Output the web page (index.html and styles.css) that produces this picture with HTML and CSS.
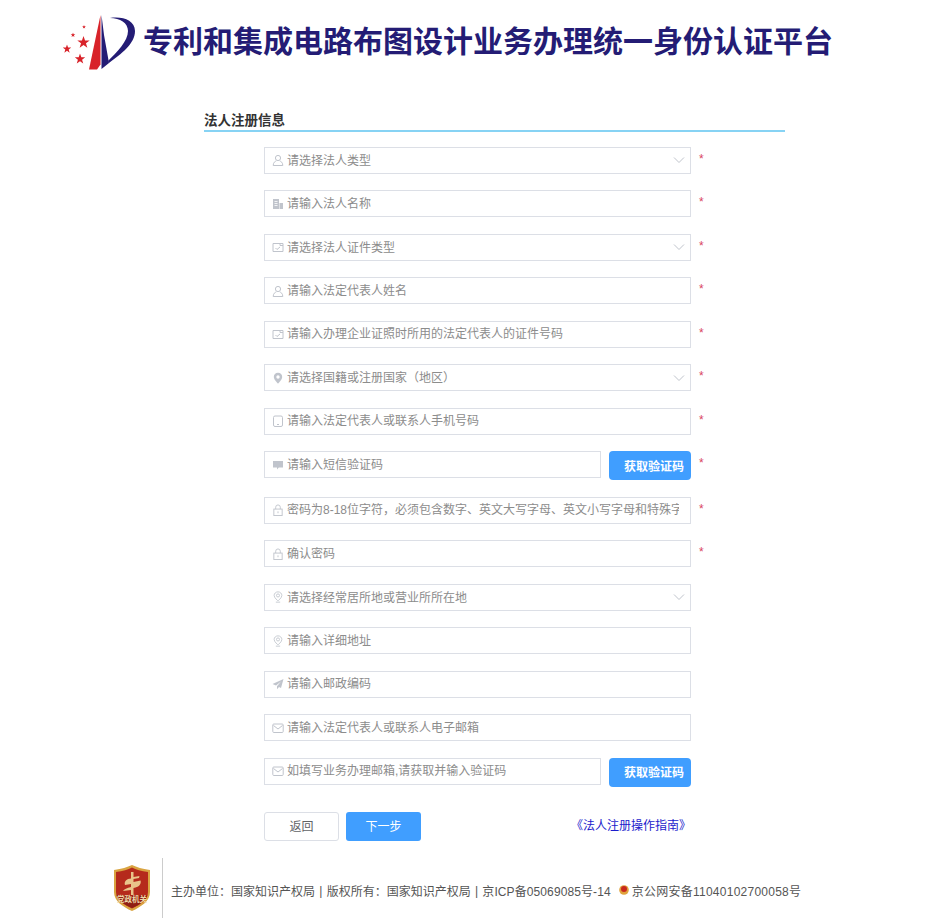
FILE: index.html

```html
<!doctype html>
<html lang="zh-CN">
<head>
  <title>专利和集成电路布图设计业务办理统一身份认证平台</title>
  <meta charset="utf-8">

  <link rel="stylesheet" href="styles.css">
</head>
<body>
  <svg class="defs" width="0" height="0">
    <symbol id="star" viewBox="-10 -10 20 20"><polygon points="0,-10 2.4,-3.2 9.5,-3.1 3.8,1.2 5.9,8.1 0,4 -5.9,8.1 -3.8,1.2 -9.5,-3.1 -2.4,-3.2"/></symbol>
    <symbol id="i-user" viewBox="0 0 12 12"><circle cx="6" cy="4" r="2.6" fill="none" stroke="currentColor"/><path d="M1.2 11.5c0-3 2-4.3 3-4.5M10.8 11.5c0-3-2-4.3-3-4.500M1.2 11.5h9.6" fill="none" stroke="currentColor"/></symbol>
    <symbol id="i-doc" viewBox="0 0 12 12"><path d="M1 1h6v10H1zM7.500 5H11v6H7.500z" fill="currentColor"/><path d="M2.500 3.500h3M2.500 5.500h3M2.500 7.500h3" stroke="#fff" stroke-width=".8"/></symbol>
    <symbol id="i-card" viewBox="0 0 12 12"><path d="M1 2.500h10v8H1z" fill="none" stroke="currentColor"/><path d="M3.500 7l1.500 1.500L8 6M8 2.500v2h3" fill="none" stroke="currentColor"/></symbol>
    <symbol id="i-pin" viewBox="0 0 12 12"><path d="M6 .8C3.400.8 1.800 2.700 1.800 4.900 1.800 7.600 6 11.500 6 11.500s4.200-3.900 4.200-6.600C10.200 2.700 8.600.8 6 .8z" fill="currentColor"/><circle cx="6" cy="5" r="1.700" fill="#fff"/></symbol>
    <symbol id="i-pin-line" viewBox="0 0 12 14"><path d="M6 1C3.300 1 1.500 3 1.500 5.300 1.500 8 6 11.500 6 11.500s4.500-3.500 4.500-6.200C10.500 3 8.700 1 6 1z" fill="none" stroke="currentColor"/><circle cx="6" cy="5.200" r="1.800" fill="none" stroke="currentColor"/><path d="M3.500 13h5" stroke="currentColor"/></symbol>
    <symbol id="i-phone" viewBox="0 0 12 12"><rect x="1.500" y="1" width="9" height="10.500" rx="1.500" fill="none" stroke="currentColor"/><path d="M5 9.500h2" stroke="currentColor"/></symbol>
    <symbol id="i-chat" viewBox="0 0 12 12"><path d="M1 2h10v6.500H6.800L5 10.500V8.500H1z" fill="currentColor"/></symbol>
    <symbol id="i-lock" viewBox="0 0 12 13"><rect x="1.500" y="5.500" width="9" height="7" fill="none" stroke="currentColor"/><path d="M3.500 5.500V3.500a2.500 2.500 0 0 1 5 0v2M6 8v2" fill="none" stroke="currentColor"/></symbol>
    <symbol id="i-send" viewBox="0 0 12 12"><path d="M11.500 1L.5 6l3.500 1.500L9 3.500 5 8.300v3l2-2.300 2 1z" fill="currentColor"/></symbol>
    <symbol id="i-mail" viewBox="0 0 12 12"><rect x=".8" y="2" width="10.400" height="8.500" rx="1" fill="none" stroke="currentColor"/><path d="M1.500 3.500L6 7l4.500-3.500" fill="none" stroke="currentColor"/></symbol>
    <symbol id="i-down" viewBox="0 0 12 12"><path d="M1 3.500l5 5 5-5" fill="none" stroke="currentColor"/></symbol>
  </svg>

  <div class="header">
    <svg class="logo" width="78" height="60" viewBox="60 12 78 60">
      <path d="M100.500 15L89 69.500h8l3.500-5z" fill="#d8232a"/>
      <path d="M101.500 15V69l7.500-6L104 35z" fill="#241c75"/>
      <path d="M110 18C120 18 128 23 128 31 128 41 117 52 108 61L109 63C121 54 135 44 135 31 135 20 122 16 110 18z" fill="#241c75"/>
      <use href="#star" x="77" y="36" width="13" height="13" fill="#d8232a"/>
      <use href="#star" x="62.500" y="44.500" width="9" height="9" fill="#d8232a"/>
      <use href="#star" x="74.500" y="53.500" width="11" height="11" fill="#d8232a"/>
      <use href="#star" x="70.500" y="32.500" width="5" height="5" fill="#d8232a"/>
      <use href="#star" x="82" y="25" width="4" height="4" fill="#d8232a"/>
    </svg>
    <div class="site-title">专利和集成电路布图设计业务办理统一身份认证平台</div>
  </div>

  <div class="register">
    <h2 class="section-title">法人注册信息</h2>
    <form class="form-list">
      <div class="row">
        <div class="field"><svg class="icon"><use href="#i-user"/></svg><span class="select-text">请选择法人类型</span><svg class="arrow"><use href="#i-down"/></svg></div>
        <span class="star">*</span>
      </div>
      <div class="row">
        <div class="field"><svg class="icon"><use href="#i-doc"/></svg><input type="text" placeholder="请输入法人名称"></div>
        <span class="star">*</span>
      </div>
      <div class="row">
        <div class="field"><svg class="icon"><use href="#i-card"/></svg><span class="select-text">请选择法人证件类型</span><svg class="arrow"><use href="#i-down"/></svg></div>
        <span class="star">*</span>
      </div>
      <div class="row">
        <div class="field"><svg class="icon"><use href="#i-user"/></svg><input type="text" placeholder="请输入法定代表人姓名"></div>
        <span class="star">*</span>
      </div>
      <div class="row">
        <div class="field"><svg class="icon"><use href="#i-card"/></svg><input type="text" placeholder="请输入办理企业证照时所用的法定代表人的证件号码"></div>
        <span class="star">*</span>
      </div>
      <div class="row">
        <div class="field"><svg class="icon"><use href="#i-pin"/></svg><span class="select-text">请选择国籍或注册国家（地区）</span><svg class="arrow"><use href="#i-down"/></svg></div>
        <span class="star">*</span>
      </div>
      <div class="row">
        <div class="field"><svg class="icon"><use href="#i-phone"/></svg><input type="text" placeholder="请输入法定代表人或联系人手机号码"></div>
        <span class="star">*</span>
      </div>
      <div class="row row-code">
        <div class="field"><svg class="icon"><use href="#i-chat"/></svg><input type="text" placeholder="请输入短信验证码"></div>
        <button type="button" class="code-btn">获取验证码</button>
        <span class="star">*</span>
      </div>
      <div class="row">
        <div class="field"><svg class="icon"><use href="#i-lock"/></svg><input type="password" placeholder="密码为8-18位字符，必须包含数字、英文大写字母、英文小写字母和特殊字符"></div>
        <span class="star">*</span>
      </div>
      <div class="row">
        <div class="field"><svg class="icon"><use href="#i-lock"/></svg><input type="password" placeholder="确认密码"></div>
        <span class="star">*</span>
      </div>
      <div class="row">
        <div class="field"><svg class="icon"><use href="#i-pin-line"/></svg><span class="select-text">请选择经常居所地或营业所所在地</span><svg class="arrow"><use href="#i-down"/></svg></div>
      </div>
      <div class="row">
        <div class="field"><svg class="icon"><use href="#i-pin-line"/></svg><input type="text" placeholder="请输入详细地址"></div>
      </div>
      <div class="row">
        <div class="field"><svg class="icon"><use href="#i-send"/></svg><input type="text" placeholder="请输入邮政编码"></div>
      </div>
      <div class="row">
        <div class="field"><svg class="icon"><use href="#i-mail"/></svg><input type="text" placeholder="请输入法定代表人或联系人电子邮箱"></div>
      </div>
      <div class="row row-code">
        <div class="field"><svg class="icon"><use href="#i-mail"/></svg><input type="text" placeholder="如填写业务办理邮箱,请获取并输入验证码"></div>
        <button type="button" class="code-btn">获取验证码</button>
      </div>
      <div class="actions">
        <button type="button" class="btn-back">返回</button>
        <button type="button" class="btn-next">下一步</button>
        <a class="guide" href="#">《法人注册操作指南》</a>
      </div>
    </form>
  </div>

  <div class="footer">
    <svg class="badge" width="40" height="46" viewBox="0 0 40 46">
      <path d="M2 5C10 4 15 2 20 0c5 2 10 4 18 5v22c0 9-9 15-18 19C11 42 2 36 2 27z" fill="#d9a441"/>
      <path d="M4 7c7-1 12-2.500 16-4.500C24 4.500 29 6 36 7v20c0 8-8 13-16 16.500C12 40 4 35 4 27z" fill="#b52a1c"/>
      <path d="M19 7h2.500v5l6-1-.5 2-5.500 1v3l7-1.500c1 3-1 6-5 7l-2 .5V30h-2.500v-5l-8 1c1-2 4-3 8-4v-3l-6 1c-1-3 1-5 3-6l3-.5z" fill="#e9c48a"/>
      <path d="M4.500 30.500h31c-1.500 5-8.500 9.500-15.500 12.500C13 40 6 35.500 4.500 30.500z" fill="#8e1f14"/>
      <text x="20" y="37" class="badge-text" text-anchor="middle">党政机关</text>
    </svg>
    <div class="footer-line"></div>
    <div class="footer-text">
      <span>主办单位：国家知识产权局</span><span class="sep">|</span><span>版权所有：国家知识产权局</span><span class="sep">|</span><span class="icp">京ICP备05069085号-14</span>
      <svg class="police" width="10" height="13" viewBox="0 0 10 13"><circle cx="5" cy="6" r="4.800" fill="#e0a33c"/><circle cx="5" cy="5" r="3" fill="#c8281e"/></svg>
      <span class="beian">京公网安备11040102700058号</span>
    </div>
  </div>
</body>
</html>
```

FILE: styles.css

```css
body {
  margin: 0;
  color: #555;
  background: #fff;
  font-family: "Liberation Sans", "Noto Sans CJK SC", sans-serif;
  font-size: 12px;
}
.defs {
  display: block;
  height: 0;
}
.header {
  display: flex;
  align-items: center;
  height: 60px;
  padding: 12px 0 0 60px;
}
.site-title {
  margin: 0 0 6px 5px;
  color: #241c75;
  font-size: 30px;
  font-weight: 700;
  white-space: nowrap;
}
.register {
  width: 581px;
  margin: 36px 0 0 204px;
}
.section-title {
  height: 19px;
  margin: 0;
  padding-top: 3px;
  line-height: 20px;
  border-bottom: 2px solid #87d3f4;
  color: #333;
  font-size: 13.5px;
  font-weight: 700;
}
.form-list {
  padding: 14.6px 0 0 60px;
}
.row {
  display: flex;
  align-items: flex-start;
  margin-bottom: 16.5px;
}
.row-code {
  margin-bottom: 16.8px;
}
.field {
  display: flex;
  align-items: center;
  box-sizing: border-box;
  flex: none;
  width: 427px;
  height: 27px;
  border: 1px solid #dcdfe6;
  background: #fff;
}
.row-code .field {
  width: 337px;
}
.icon {
  flex: none;
  width: 12px;
  height: 12px;
  margin: 0 3px 0 7px;
  color: #c0c4cc;
}
.arrow {
  flex: none;
  width: 12px;
  height: 12px;
  margin-right: 5px;
  color: #c0c4cc;
}
.select-text {
  flex: 1;
  padding-bottom: 2px;
  color: #8c8c8c;
}
.field input {
  flex: 1;
  min-width: 0;
  height: 100%;
  padding: 0 11px 0 0;
  border: none;
  outline: none;
  background: none;
  font: inherit;
}
.field input::placeholder {
  color: #8c8c8c;
  opacity: 1;
}
.star {
  margin-left: 8px;
  color: #d9455f;
  line-height: 24px;
}
.code-btn {
  flex: none;
  width: 82px;
  height: 29px;
  margin-left: 8px;
  padding: 0 0 1px 8px;
  border: none;
  border-radius: 4px;
  background: #409eff;
  color: #fff;
  font: inherit;
  font-weight: 700;
}
.actions {
  display: flex;
  align-items: center;
  width: 427px;
  padding-top: 8px;
}
.btn-back,
.btn-next {
  box-sizing: border-box;
  width: 75px;
  height: 29px;
  padding-bottom: 2px;
  border-radius: 3px;
  font: inherit;
}
.btn-back {
  border: 1px solid #dcdfe6;
  background: #fff;
  color: #606266;
}
.btn-next {
  margin-left: 7px;
  border: none;
  background: #409eff;
  color: #fff;
}
.guide {
  margin-left: auto;
  padding-bottom: 3px;
  color: #1c1ccc;
  text-decoration: none;
}
.footer {
  display: flex;
  align-items: center;
  height: 60px;
  margin-top: 17px;
  padding-left: 112px;
}
.badge-text {
  fill: #f0d9a8;
  font-size: 7.5px;
  font-weight: 700;
}
.footer-line {
  width: 1px;
  height: 60px;
  margin: 0 8px 0 10px;
  background: #ccc;
}
.footer-text {
  display: flex;
  align-items: center;
  padding-top: 6px;
  white-space: nowrap;
}
.sep {
  margin: 0 4.25px;
}
.icp {
  letter-spacing: .1px;
}
.beian {
  letter-spacing: .25px;
}
.police {
  margin: 0 3px 0 8px;
}
```
